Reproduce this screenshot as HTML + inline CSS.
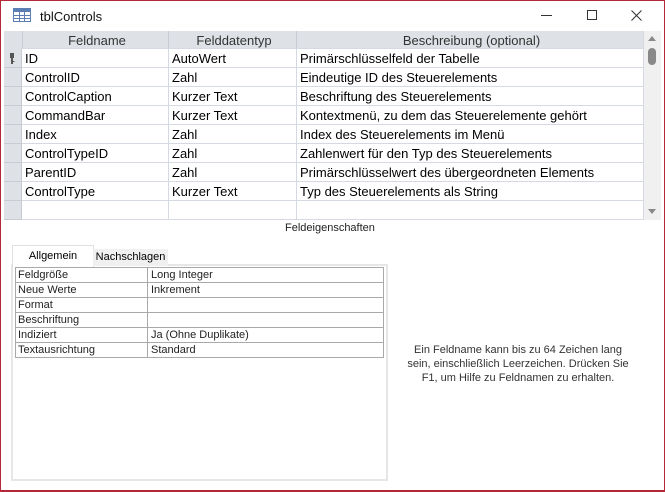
<!DOCTYPE html>
<html><head><meta charset="utf-8"><style>
*{margin:0;padding:0;box-sizing:border-box}
body{width:665px;height:492px;background:#fff;position:relative;overflow:hidden;font-family:"Liberation Sans",sans-serif;color:#000}
.a{position:absolute}
.win{left:0;top:0;width:665px;height:492px;border:1px solid #b5283a;border-bottom-width:2px}
.g{font-size:13px;line-height:19px;white-space:nowrap}
.hd{background:#dee1e6;color:#333;text-align:center}
.cell{border-right:1px solid #d4d9e2;border-bottom:1px solid #d4d9e2;padding-left:3px;overflow:hidden}
.p{font-size:11px;line-height:15px;color:#222}
</style></head><body>
<div class="a win"></div>
<svg class="a" style="left:13px;top:8px" width="18" height="14" viewBox="0 0 18 14"><rect x="0.5" y="0.5" width="17" height="13" fill="#fff" stroke="#5b7fb3"/><rect x="1" y="1" width="16" height="3" fill="#5b7fb3"/><path d="M1 7.5H17M1 10.5H17M6.5 4V13M11.5 4V13" stroke="#5b7fb3"/></svg>
<div class="a" style="left:40px;top:9px;font-size:13px;color:#111">tblControls</div>
<div class="a" style="left:541px;top:15px;width:11px;height:1px;background:#333"></div>
<div class="a" style="left:587px;top:10px;width:10px;height:10px;border:1px solid #333"></div>
<svg class="a" style="left:631px;top:10px" width="11" height="11"><path d="M0.5 0.5L10.5 10.5M10.5 0.5L0.5 10.5" stroke="#333"/></svg>
<div class="a" style="left:4px;top:31px;width:640px;height:189px;background:#fff"></div>
<div class="a" style="left:4px;top:31px;width:18px;height:189px;background:#dee1e6"></div>
<div class="a g hd" style="left:4px;top:31px;width:640px;height:18px"></div>
<div class="a g hd cell" style="left:22px;top:31px;width:147px;height:18px;border-left:1px solid #c8ccd2;border-right-color:#c8ccd2">Feldname</div>
<div class="a g hd cell" style="left:169px;top:31px;width:128px;height:18px;border-right-color:#c8ccd2">Felddatentyp</div>
<div class="a g hd cell" style="left:297px;top:31px;width:347px;height:18px">Beschreibung (optional)</div>
<svg class="a" style="left:9px;top:53px" width="6" height="12"><rect x="1" y="0" width="4" height="5" fill="#555"/><rect x="2" y="5" width="2" height="6" fill="#555"/><rect x="4" y="8" width="1.5" height="1" fill="#555"/></svg>
<div id="rows"></div>
<script>
var d=[["ID","AutoWert","Primärschlüsselfeld der Tabelle"],["ControlID","Zahl","Eindeutige ID des Steuerelements"],["ControlCaption","Kurzer Text","Beschriftung des Steuerelements"],["CommandBar","Kurzer Text","Kontextmenü, zu dem das Steuerelemente gehört"],["Index","Zahl","Index des Steuerelements im Menü"],["ControlTypeID","Zahl","Zahlenwert für den Typ des Steuerelements"],["ParentID","Zahl","Primärschlüsselwert des übergeordneten Elements"],["ControlType","Kurzer Text","Typ des Steuerelements als String"],["","",""]];
var h="";for(var i=0;i<d.length;i++){var y=49+i*19;
h+='<div class="a g cell" style="left:4px;top:'+y+'px;width:18px;height:19px;border-bottom-color:#c8ccd2;border-right-color:#c8ccd2"></div>';
h+='<div class="a g cell" style="left:22px;top:'+y+'px;width:147px;height:19px">'+d[i][0]+'</div>';
h+='<div class="a g cell" style="left:169px;top:'+y+'px;width:128px;height:19px">'+d[i][1]+'</div>';
h+='<div class="a g cell" style="left:297px;top:'+y+'px;width:347px;height:19px">'+d[i][2]+'</div>';}
document.getElementById("rows").innerHTML=h;
</script>
<div class="a" style="left:644px;top:31px;width:17px;height:189px;background:#f0f0f0"></div>
<svg class="a" style="left:647px;top:35px" width="10" height="6"><path d="M1 6L5 1L9 6Z" fill="#888"/></svg>
<div class="a" style="left:648px;top:48px;width:8px;height:17px;border-radius:4px;background:#888"></div>
<svg class="a" style="left:647px;top:209px" width="10" height="6"><path d="M1 0L5 5L9 0Z" fill="#888"/></svg>
<div class="a" style="left:285px;top:222px;font-size:11px;color:#222">Feldeigenschaften</div>
<div class="a" style="left:11px;top:264px;width:377px;height:217px;border:2px solid #e6e6e6;background:#fff"></div>
<div class="a" style="left:12px;top:245px;width:82px;height:22px;background:#fff;border:1px solid #e0e0e0;border-bottom:none;font-size:11px;text-align:center;line-height:20px">Allgemein</div>
<div class="a" style="left:93px;top:249px;width:75px;height:17px;background:#f0f0f0;font-size:11px;text-align:center;line-height:16px">Nachschlagen</div>
<div id="pr"></div>
<script>
var p=[["Feldgröße","Long Integer"],["Neue Werte","Inkrement"],["Format",""],["Beschriftung",""],["Indiziert","Ja (Ohne Duplikate)"],["Textausrichtung","Standard"]];
var s="";for(var i=0;i<p.length;i++){var y=267+i*15;
s+='<div class="a p" style="left:15px;top:'+y+'px;width:133px;height:16px;border:1px solid #a9a9a9;padding-left:2px">'+p[i][0]+'</div>';
s+='<div class="a p" style="left:147px;top:'+y+'px;width:237px;height:16px;border:1px solid #a9a9a9;padding-left:3px">'+p[i][1]+'</div>';}
document.getElementById("pr").innerHTML=s;
</script>
<div class="a" style="left:392px;top:343px;width:252px;text-align:center;font-size:11px;line-height:14px;color:#333;white-space:nowrap">Ein Feldname kann bis zu 64 Zeichen lang<br>sein, einschließlich Leerzeichen. Drücken Sie<br>F1, um Hilfe zu Feldnamen zu erhalten.</div>
</body></html>
